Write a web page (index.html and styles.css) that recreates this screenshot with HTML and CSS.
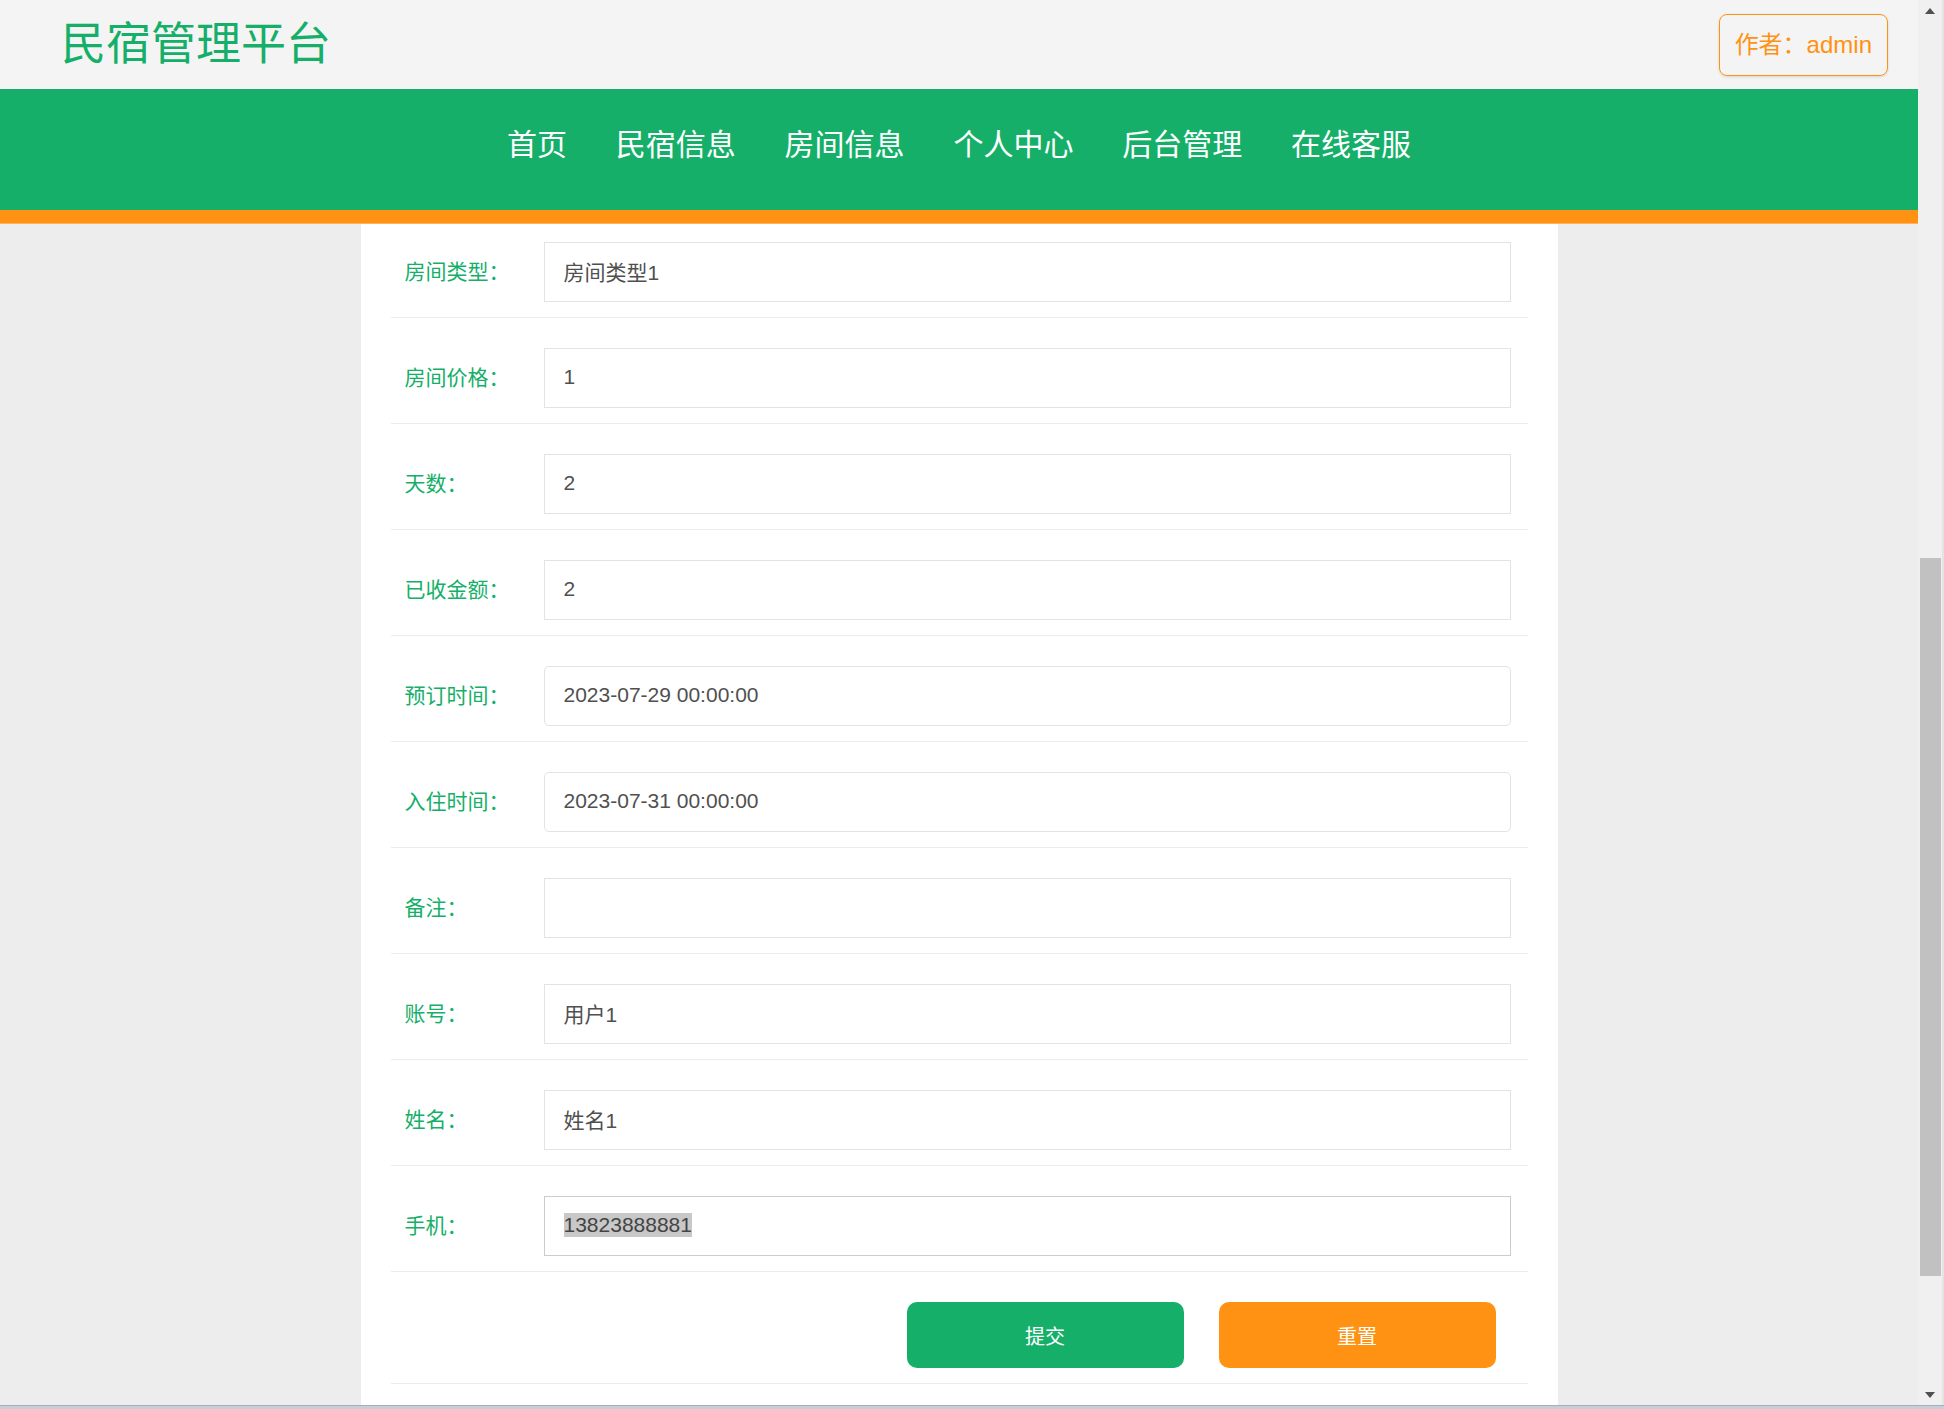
FILE: index.html
```html
<!DOCTYPE html>
<html lang="zh-CN">
<head>
<meta charset="utf-8">
<title>民宿管理平台</title>
<link rel="stylesheet" href="styles.css">
</head>
<body>
<div class="window">
  <div class="viewport">
    <div class="page">
      <header class="topbar">
        <h1 class="brand">民宿管理平台</h1>
        <div class="author">作者：admin</div>
      </header>
      <nav class="mainnav">
        <a href="#">首页</a>
        <a href="#">民宿信息</a>
        <a href="#">房间信息</a>
        <a href="#">个人中心</a>
        <a href="#">后台管理</a>
        <a href="#">在线客服</a>
      </nav>
      <div class="accent"></div>
      <main class="content">
        <section class="panel">
          <form class="form">
            <div class="row row-first"><label class="label">房间类型：</label><div class="input">房间类型1</div></div>
            <div class="row"><label class="label">房间价格：</label><div class="input">1</div></div>
            <div class="row"><label class="label">天数：</label><div class="input">2</div></div>
            <div class="row"><label class="label">已收金额：</label><div class="input">2</div></div>
            <div class="row"><label class="label">预订时间：</label><div class="input input-date">2023-07-29 00:00:00</div></div>
            <div class="row"><label class="label">入住时间：</label><div class="input input-date">2023-07-31 00:00:00</div></div>
            <div class="row"><label class="label">备注：</label><div class="input"></div></div>
            <div class="row"><label class="label">账号：</label><div class="input">用户1</div></div>
            <div class="row"><label class="label">姓名：</label><div class="input">姓名1</div></div>
            <div class="row"><label class="label">手机：</label><div class="input input-focus"><span class="selected">13823888881</span></div></div>
            <div class="row row-actions">
              <button type="button" class="btn btn-submit">提交</button>
              <button type="button" class="btn btn-reset">重置</button>
            </div>
          </form>
        </section>
      </main>
    </div>
    <div class="scrollbar">
      <div class="sb-btn"><span class="sb-arrow-up"></span></div>
      <div class="sb-track"><div class="sb-thumb"></div></div>
      <div class="sb-btn"><span class="sb-arrow-down"></span></div>
    </div>
  </div>
  <div class="frame-bottom"></div>
</div>
</body>
</html>
```

FILE: styles.css
```css
* { box-sizing: border-box; }

html, body {
  margin: 0;
  padding: 0;
}

body {
  font-family: "Liberation Sans", "Noto Sans CJK SC", sans-serif;
  background: #ededed;
  overflow: hidden;
}

.window {
  width: 1944px;
  height: 1409px;
  display: flex;
  flex-direction: column;
}

.viewport {
  flex: 1;
  min-height: 0;
  display: flex;
}

.page {
  flex: 1;
  min-width: 0;
  display: flex;
  flex-direction: column;
}

/* top header */
.topbar {
  height: 89px;
  flex: none;
  background: #f4f4f4;
  display: flex;
  align-items: center;
  justify-content: space-between;
  padding: 0 30px 0 61px;
}

.brand {
  margin: 0;
  font-size: 45px;
  font-weight: normal;
  line-height: 1;
  color: #15af69;
}

.author {
  height: 62px;
  line-height: 60px;
  padding: 0 15px;
  border: 1px solid #ff9213;
  border-radius: 8px;
  color: #ff9213;
  font-size: 24px;
  box-shadow: 0 1px 3px rgba(0, 0, 0, 0.12);
}

/* navigation */
.mainnav {
  height: 121px;
  flex: none;
  background: #15af69;
  display: flex;
  justify-content: center;
  align-items: center;
  padding-bottom: 9px;
}

.mainnav a {
  color: #fff;
  font-size: 30px;
  line-height: 1;
  padding: 0 24.4px;
  text-decoration: none;
}

.accent {
  height: 14px;
  flex: none;
  background: #ff9213;
  border-bottom: 1px solid #ffb25a;
}

/* content */
.content {
  flex: 1;
  min-height: 0;
  overflow: hidden;
}

.panel {
  width: 1197px;
  height: 100%;
  margin: 0 auto;
  background: #fff;
  padding: 0 30px;
}

.row {
  display: flex;
  align-items: center;
  padding: 30px 0 15px;
  border-bottom: 1px solid #ececec;
}

.row-first {
  padding-top: 18px;
}

.label {
  width: 153px;
  flex: none;
  padding-left: 14px;
  padding-bottom: 4px;
  font-size: 21px;
  color: #15af69;
}

.input {
  width: 967px;
  height: 60px;
  border: 1px solid #e2e2e8;
  padding: 0 19px 2px;
  display: flex;
  align-items: center;
  font-size: 21px;
  color: #505050;
  background: #fff;
}

.input-date {
  border-radius: 5px;
}

.input-focus {
  border-color: #cccccc;
}

.selected {
  background: #c8c8c8;
  color: #444;
}

.row-actions {
  padding-left: 516px;
  gap: 35px;
}

.btn {
  width: 277px;
  height: 66px;
  border: 0;
  border-radius: 10px;
  color: #fff;
  font-size: 20px;
  font-family: inherit;
  cursor: pointer;
}

.btn-submit { background: #15af69; }
.btn-reset { background: #ff9213; }

/* fake window scrollbar */
.scrollbar {
  width: 26px;
  flex: none;
  background: #f0f0f0;
  display: flex;
  flex-direction: column;
  border-right: 2px solid #e4e4e4;
}

.sb-btn {
  height: 21px;
  flex: none;
  display: flex;
  align-items: center;
  justify-content: center;
}

.sb-arrow-up,
.sb-arrow-down {
  width: 0;
  height: 0;
  border-left: 5px solid transparent;
  border-right: 5px solid transparent;
}

.sb-arrow-up { border-bottom: 6px solid #505050; }
.sb-arrow-down { border-top: 6px solid #505050; }

.sb-track {
  flex: 1;
  padding: 0 1px 0 2px;
}

.sb-thumb {
  margin-top: 537px;
  height: 718px;
  background: #c1c1c1;
}

.frame-bottom {
  height: 4px;
  flex: none;
  background: #c6ceda;
  border-top: 1px solid #a7afba;
}
```
